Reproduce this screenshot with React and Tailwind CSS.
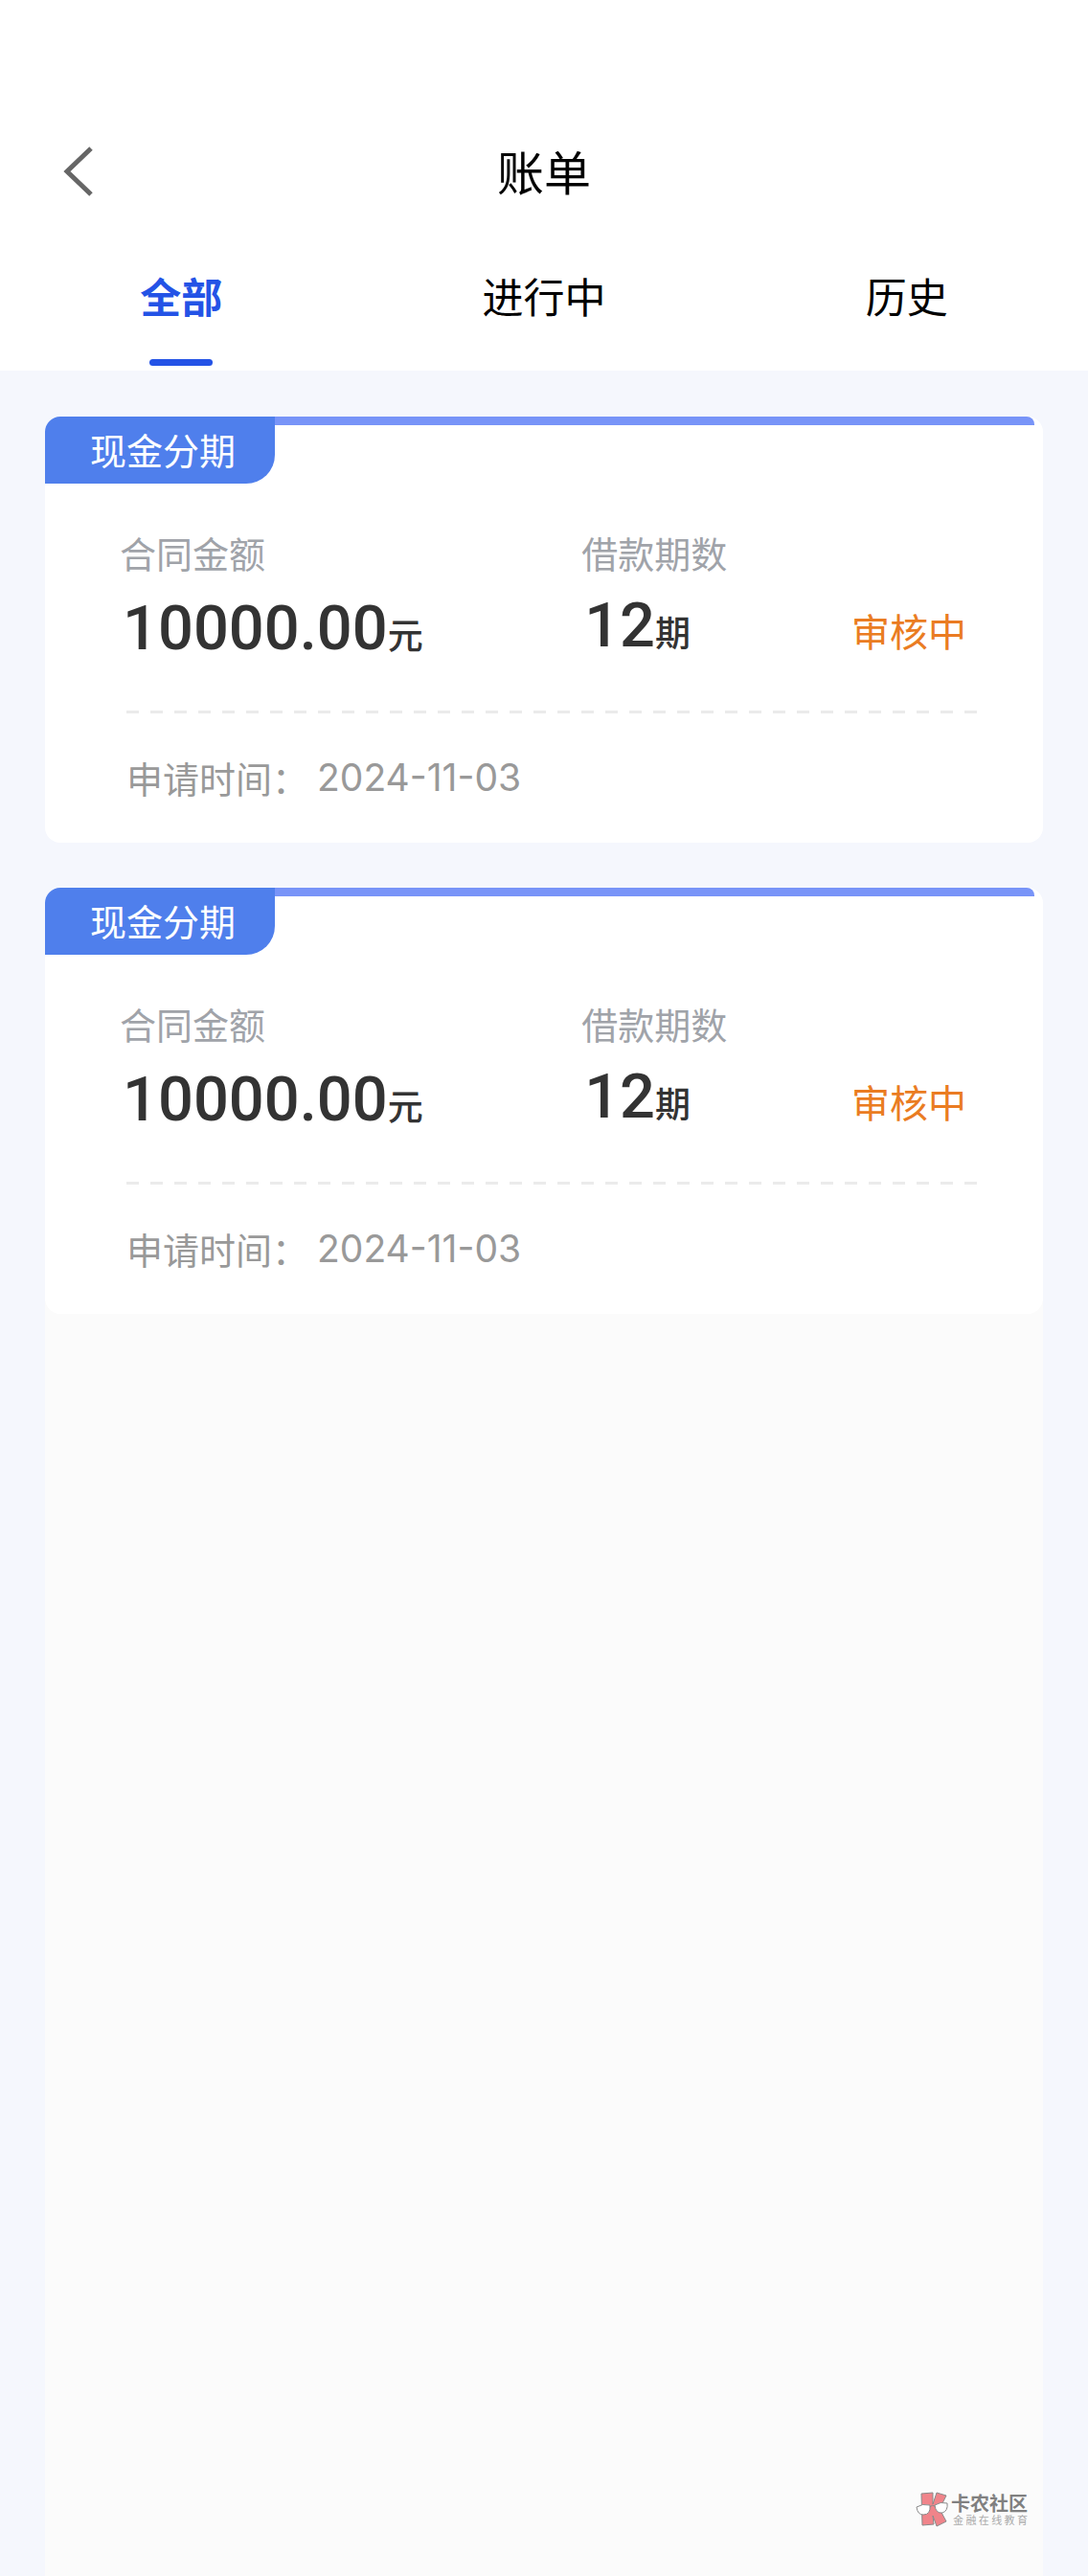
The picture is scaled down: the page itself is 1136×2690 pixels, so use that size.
import React from 'react';

const tabs = [
  { id: 'all', label: '全部' },
  { id: 'doing', label: '进行中' },
  { id: 'history', label: '历史' },
];

const bills = [
  { id: 1, type: '现金分期', amount: '10000.00', periods: 12, status: '审核中', date: '2024-11-03' },
  { id: 2, type: '现金分期', amount: '10000.00', periods: 12, status: '审核中', date: '2024-11-03' },
];

const TopBar = () => (
  <header className="grid grid-cols-[1fr_auto_1fr] items-center h-[120px] mt-[120px] px-[64px]">
    <button type="button" aria-label="返回" className="w-9 h-14">
      <svg viewBox="0 0 36 56" className="w-9 h-14" fill="none" stroke="#666" strokeWidth="5">
        <path d="M31 3 L6 27 L31 51" />
      </svg>
    </button>
    <h1 className="pb-1 text-[49px] leading-[56px] text-black">账单</h1>
  </header>
);

const Tabs = ({ active, onChange }) => (
  <nav className="grid grid-cols-3 h-[147px]">
    {tabs.map((tab) => (
      <button
        key={tab.id}
        type="button"
        onClick={() => onChange(tab.id)}
        className={`flex flex-col items-center justify-between pt-[38px] pb-[5px] text-[43px] leading-[60px] ${
          active === tab.id ? 'font-bold text-[#2453e6]' : 'text-black'
        }`}
      >
        {tab.label}
        {active === tab.id && <span className="w-[66px] h-[7px] rounded-full bg-[#2453e6]"></span>}
      </button>
    ))}
  </nav>
);

const BillCard = ({ bill }) => (
  <article className="bg-white rounded-2xl pb-[40px]">
    <div className="flex items-start pr-[9px]">
      <span className="w-[240px] h-[70px] pl-[47px] rounded-tl-2xl rounded-br-[30px] bg-[#4f7fec] text-white text-[38px] leading-[68px]">
        {bill.type}
      </span>
      <span className="flex-1 h-[9px] rounded-tr-lg bg-[#7894f8]"></span>
    </div>

    <div className="grid grid-cols-[6fr_5fr] pl-[78px] pr-[80px] pt-[48px]">
      <div>
        <p className="text-[38px] leading-[48px] text-[#a0a3a9]">合同金额</p>
        <p className="flex items-baseline pl-[3px] pt-[23px] text-[#333] font-medium">
          <span className="font-[Roboto] text-[65px] leading-[64px]">{bill.amount}</span>
          <span className="text-[37px] leading-none">元</span>
        </p>
      </div>
      <div className="flex items-end justify-between">
        <div className="self-start">
          <p className="text-[38px] leading-[48px] text-[#a0a3a9]">借款期数</p>
          <p className="flex items-baseline pl-[3px] pt-[20px] text-[#333] font-medium">
            <span className="font-[Roboto] text-[65px] leading-[64px]">{bill.periods}</span>
            <span className="text-[37px] leading-none">期</span>
          </p>
        </div>
        <p className="pb-[2px] text-[40px] leading-[56px] text-[#ea7c22]">{bill.status}</p>
      </div>
    </div>

    <div className="h-[3px] ml-[85px] mr-[69px] mt-[54px] bg-[repeating-linear-gradient(to_right,#ebebeb_0_13px,transparent_13px_25px)]"></div>

    <p className="flex items-center gap-[9px] pl-[85px] pt-[39px] text-[38px] leading-[56px] text-[#999]">
      <span>申请时间：</span>
      <time className="font-[Inter] text-[39px]">{bill.date}</time>
    </p>
  </article>
);

const Watermark = () => (
  <div className="flex items-center gap-[3px]">
    <svg viewBox="0 0 34 38" className="w-[34px] h-[38px]" stroke="#8a8a8a" strokeWidth="1">
      <path d="M6 3 L18 2 V14 L22 2 L32 5 L25 19 L32 32 L22 37 L18 26 L19 35 L7 36 Z" fill="#f0848a" />
      <path d="M1 17 Q7 13 15 15 Q16 25 8 25 Q2 25 1 17 Z" fill="#fff" />
      <path d="M20 15 Q26 11 33 13 Q34 21 28 23 Q21 24 20 15 Z" fill="#fff" />
      <path d="M15 17 Q17 14 20 16" fill="none" />
    </svg>
    <div className="w-20">
      <p className="text-[20px] leading-[22px] font-bold text-[#808080]">卡农社区</p>
      <p className="flex justify-between pl-[2px] text-[11px] leading-3 text-[#aaa]">
        {[...'金融在线教育'].map((ch) => (
          <span key={ch}>{ch}</span>
        ))}
      </p>
    </div>
  </div>
);

const App = () => {
  const [active, setActive] = React.useState('all');

  return (
    <div className="min-h-screen flex flex-col bg-[#f5f7fd] font-['Noto_Sans_CJK_SC',sans-serif]">
      <div className="bg-white">
        <TopBar />
        <Tabs active={active} onChange={setActive} />
      </div>
      <main className="flex-1 flex flex-col px-[47px] pt-12">
        <section className="relative z-10 flex flex-col gap-[47px]">
          {bills.map((bill) => (
            <BillCard key={bill.id} bill={bill} />
          ))}
        </section>
        <div className="flex-1 flex items-end justify-end -mt-4 pr-4 pb-[51px] bg-[#fbfbfb]">
          <Watermark />
        </div>
      </main>
    </div>
  );
};

export default App;
